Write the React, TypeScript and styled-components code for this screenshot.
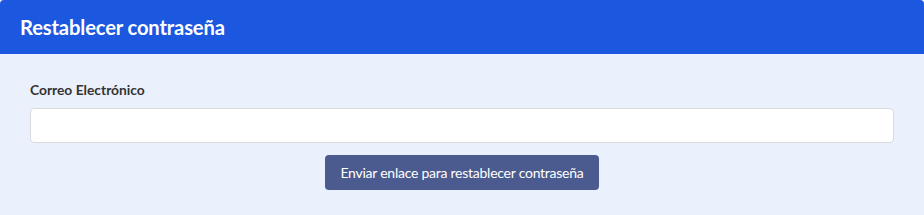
import React from "react";
import styled, { createGlobalStyle } from "styled-components";

const Global = createGlobalStyle`
  html, body { margin: 0; padding: 0; background: #ffffff; }
  body { font-family: Lato, "Open Sans", sans-serif; }
  * { box-sizing: border-box; }
`;

const Card = styled.div`
  width: 924px;
  min-height: 215px;
  border-radius: 4px 4px 0 0;
  overflow: hidden;
  background: #eaf0fc;
`;

const Header = styled.div`
  height: 54px;
  background: #1c57e0;
  display: flex;
  align-items: center;
  padding: 0 20px;
`;

const Title = styled.h1`
  margin: 0;
  color: #ffffff;
  font-size: 20.2px;
  font-weight: 700;
  letter-spacing: -0.15px;
`;

const Body = styled.form`
  padding: 27px 30px 24px;
  display: flex;
  flex-direction: column;
`;

const Label = styled.label`
  font-size: 13.8px;
  font-weight: 700;
  color: #333333;
  margin-bottom: 10px;
  line-height: 17px;
`;

const Input = styled.input`
  height: 35px;
  width: 100%;
  border: 1px solid #d9d9de;
  border-radius: 4px;
  background: #ffffff;
  padding: 0 10px;
  font-size: 14px;
  font-family: inherit;
  outline: none;
`;

const Actions = styled.div`
  display: flex;
  justify-content: center;
  margin-top: 12px;
`;

const Button = styled.button`
  height: 35px;
  padding: 0 15px;
  border: none;
  border-radius: 4px;
  background: #4b5b8f;
  color: #ffffff;
  font-family: inherit;
  font-size: 14px;
  letter-spacing: -0.25px;
  white-space: nowrap;
  cursor: pointer;
`;

export default function App() {
  return (
    <>
      <Global />
      <Card>
        <Header>
          <Title>Restablecer contraseña</Title>
        </Header>
        <Body onSubmit={(e) => e.preventDefault()}>
          <Label htmlFor="email">Correo Electrónico</Label>
          <Input id="email" type="email" />
          <Actions>
            <Button type="submit">Enviar enlace para restablecer contraseña</Button>
          </Actions>
        </Body>
      </Card>
    </>
  );
}
